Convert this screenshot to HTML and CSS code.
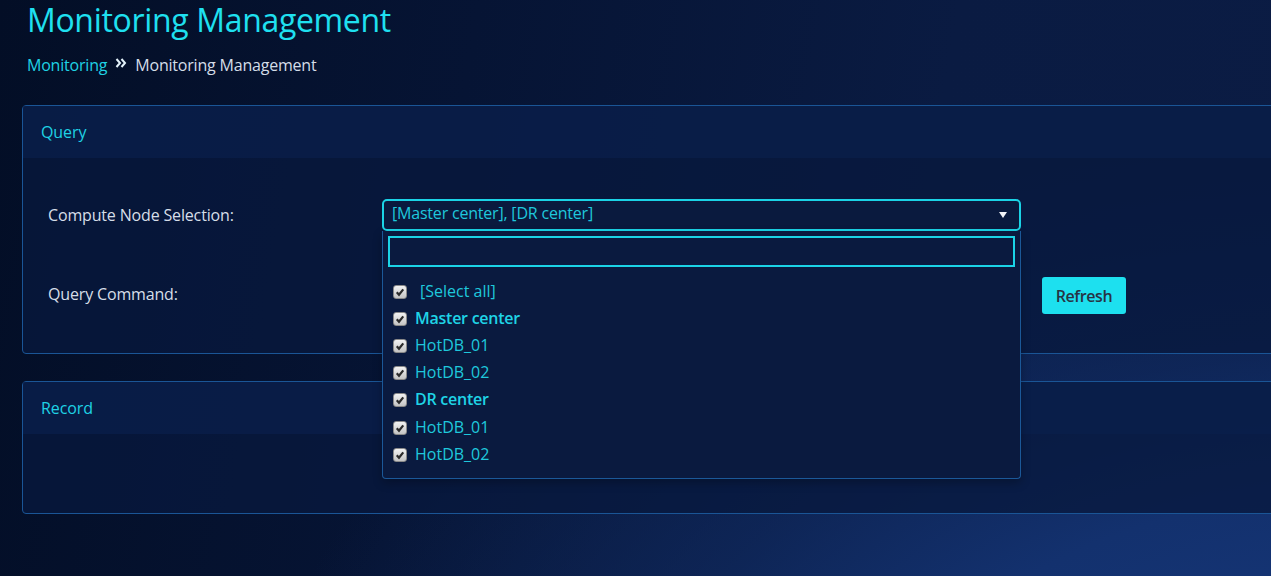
FILE: index.html
```html
<!DOCTYPE html>
<html lang="en">
<head>
<meta charset="utf-8">
<title>Monitoring Management</title>
<link rel="stylesheet" href="styles.css">
</head>
<body>
<div class="page">
  <h1 class="title">Monitoring Management</h1>
  <nav class="crumbs">
    <a class="crumb-link">Monitoring</a>
    <svg class="crumb-sep" width="12" height="12" viewBox="0 0 12 12"><polyline points="1.5,2 5,6 1.5,10" /><polyline points="6.5,2 10,6 6.5,10" /></svg>
    <span class="crumb-current">Monitoring Management</span>
  </nav>

  <section class="panel">
    <div class="panel-head">Query</div>
    <div class="panel-body query-form">
      <div class="label">Compute Node Selection:</div>
      <div class="select-wrap">
        <div class="select">
          <span class="select-value">[Master center], [DR center]</span>
          <span class="caret"></span>
        </div>
        <div class="dropdown">
          <div class="search"></div>
          <ul class="options">
            <li class="option"><span class="check"><svg viewBox="0 0 13 13"><path d="M3 6.8 L5.4 9.4 L10 3.6" /></svg></span><span class="opt-text all">[Select all]</span></li>
            <li class="option"><span class="check"><svg viewBox="0 0 13 13"><path d="M3 6.8 L5.4 9.4 L10 3.6" /></svg></span><span class="opt-text group">Master center</span></li>
            <li class="option"><span class="check"><svg viewBox="0 0 13 13"><path d="M3 6.8 L5.4 9.4 L10 3.6" /></svg></span><span class="opt-text">HotDB_01</span></li>
            <li class="option"><span class="check"><svg viewBox="0 0 13 13"><path d="M3 6.8 L5.4 9.4 L10 3.6" /></svg></span><span class="opt-text">HotDB_02</span></li>
            <li class="option"><span class="check"><svg viewBox="0 0 13 13"><path d="M3 6.8 L5.4 9.4 L10 3.6" /></svg></span><span class="opt-text group">DR center</span></li>
            <li class="option"><span class="check"><svg viewBox="0 0 13 13"><path d="M3 6.8 L5.4 9.4 L10 3.6" /></svg></span><span class="opt-text">HotDB_01</span></li>
            <li class="option"><span class="check"><svg viewBox="0 0 13 13"><path d="M3 6.8 L5.4 9.4 L10 3.6" /></svg></span><span class="opt-text">HotDB_02</span></li>
          </ul>
        </div>
      </div>
      <div></div>
      <div class="label cmd-label">Query Command:</div>
      <div class="command"></div>
      <button class="btn">Refresh</button>
    </div>
  </section>

  <section class="panel record">
    <div class="panel-head">Record</div>
    <div class="panel-body record-body"></div>
  </section>
</div>
</body>
</html>
```

FILE: styles.css
```css
* { box-sizing: border-box; }

html, body {
  margin: 0;
  height: 100%;
}

body {
  overflow: hidden;
  font-family: "Open Sans", "Noto Sans", sans-serif;
  font-size: 16px;
  color: #d6dee8;
  background:
    radial-gradient(ellipse 1300px 700px at 108% 128%, #17387c 0%, #13316e 35%, rgba(16, 42, 96, 0.7) 55%, rgba(10, 28, 64, 0) 85%),
    linear-gradient(100deg, #030e26 0%, #061434 35%, #0a1b42 70%, #0b1c44 100%);
}

.page {
  padding-left: 22px;
  width: 1300px;
}

.title {
  margin: 0 0 0 5px;
  font-size: 32px;
  line-height: 40px;
  font-weight: 400;
  letter-spacing: -0.33px;
  color: #1fe0f0;
}

.crumbs {
  margin: 14px 0 0 5px;
  height: 22px;
  line-height: 22px;
  display: flex;
  align-items: center;
  letter-spacing: -0.2px;
}

.crumb-link {
  color: #1fd2e4;
}

.crumb-sep {
  margin: 0 8px 0 8px;
  fill: none;
  stroke: #e4f2fa;
  stroke-width: 2;
  position: relative;
  top: -2px;
}

.crumb-current {
  color: #d4dde8;
}

.panel {
  width: 1265px;
  margin-top: 29px;
  border: 1px solid #1a5596;
  border-radius: 4px;
  background: rgba(8, 24, 62, 0.78);
}

.panel.record {
  margin-top: 27px;
}

.panel-head {
  height: 52px;
  line-height: 52px;
  padding-left: 18px;
  color: #1fd2e4;
  letter-spacing: -0.1px;
  background: rgba(10, 32, 76, 0.7);
}

.query-form {
  display: grid;
  grid-template-columns: 313px 639px auto;
  grid-template-rows: 32px 37px;
  column-gap: 21px;
  row-gap: 46px;
  padding: 41px 25px 39px;
  align-items: center;
}

.label {
  color: #d6dee8;
  letter-spacing: -0.16px;
}

.label.cmd-label {
  margin-top: -3px;
}

.select-wrap {
  position: relative;
  height: 32px;
  z-index: 2;
}

.select {
  height: 32px;
  border: 2px solid #1bd3e6;
  border-radius: 5px;
  display: flex;
  align-items: center;
  justify-content: space-between;
  padding: 0 12px 0 8px;
  background: #0a1a3e;
}

.select-value {
  color: #1fc8dc;
  line-height: 28px;
  letter-spacing: -0.2px;
  position: relative;
  top: -2px;
}

.caret {
  width: 0;
  height: 0;
  border-left: 4px solid transparent;
  border-right: 4px solid transparent;
  border-top: 6px solid #f2f4f8;
}

.dropdown {
  position: absolute;
  top: 32px;
  left: 0;
  width: 639px;
  height: 248px;
  border: 1px solid #1b5898;
  border-top: none;
  border-radius: 0 0 4px 4px;
  background: #0a1a3f;
  padding: 5px 5px 0;
  box-shadow: 0 4px 10px rgba(0, 0, 0, 0.25);
}

.search {
  height: 31px;
  border: 2px solid #1bd3e6;
}

.options {
  list-style: none;
  margin: 0;
  padding: 10px 0 0 5px;
}

.option {
  height: 27.2px;
  display: flex;
  align-items: center;
}

.check {
  width: 14px;
  height: 14px;
  border-radius: 3px;
  background: linear-gradient(#f2f2f2, #c4c4c4);
  border: 1px solid #8a8a8a;
  display: flex;
  align-items: center;
  justify-content: center;
  margin-right: 8px;
  margin-top: 2px;
}

.check svg {
  width: 12px;
  height: 12px;
  fill: none;
  stroke: #2b2b2b;
  stroke-width: 2.4;
}

.opt-text {
  color: #1fc8dc;
  line-height: 20px;
}

.opt-text.all {
  margin-left: 5px;
}

.opt-text.group {
  font-weight: 600;
  letter-spacing: -0.25px;
  color: #1fd4e6;
}

.command {
  height: 32px;
}

.btn {
  justify-self: start;
  width: 84px;
  height: 37px;
  border: none;
  border-radius: 3px;
  background: #1de0ef;
  color: #273344;
  font-family: "Open Sans", "Noto Sans", sans-serif;
  font-size: 16px;
  font-weight: 600;
  letter-spacing: -0.4px;
  padding: 0;
}

.record-body {
  height: 79px;
}
```
